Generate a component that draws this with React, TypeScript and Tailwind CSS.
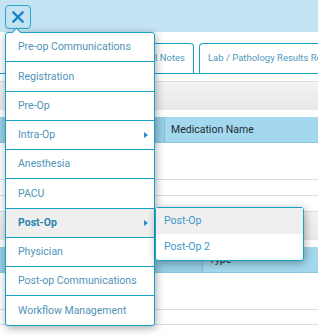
import React from 'react';

interface MenuItem {
  label: string;
  h: string;
  arrow?: boolean;
  active?: boolean;
}

// heights include the 1px divider (border-box)
const menuItems: MenuItem[] = [
  { label: 'Pre-op Communications', h: 'h-[29px]' },
  { label: 'Registration', h: 'h-[30px]' },
  { label: 'Pre-Op', h: 'h-[29px]' },
  { label: 'Intra-Op', h: 'h-[29px]', arrow: true },
  { label: 'Anesthesia', h: 'h-[29px]' },
  { label: 'PACU', h: 'h-[30px]' },
  { label: 'Post-Op', h: 'h-[29px]', arrow: true, active: true },
  { label: 'Physician', h: 'h-[29px]' },
  { label: 'Post-op Communications', h: 'h-[29px]' },
  { label: 'Workflow Management', h: 'h-[29px]' },
];

const Arrow = () => (
  <span className="ml-auto mr-[6px] w-0 h-0 border-y-[3px] border-y-transparent border-l-[4px] border-l-[#2a8fc4]" />
);

const Toolbar = () => (
  <div className="h-[29px] border-t border-[#dcdcdc] bg-gradient-to-b from-[#f3f3f3] to-[#e7e7e7]" />
);

const TableHeader = ({ firstCol, label }: { firstCol: string; label: string }) => (
  <div className="flex h-[26px] bg-[#a3d8ee] border-b border-[#8cc6de] text-[10.5px] text-[#1f2a30]">
    <div className={`${firstCol} shrink-0 bg-[#97cfe6] border-r border-[#84bfd8]`} />
    <div className="flex items-center pl-[6px]">{label}</div>
  </div>
);

export default function App() {
  return (
    <div
      className="relative w-[318px] h-[335px] overflow-hidden bg-white"
      style={{ fontFamily: 'Roboto, "Liberation Sans", Arial, sans-serif' }}
    >
      {/* top bar */}
      <div className="h-[32px] bg-[#c4e4f4] pt-[5px] pl-[5px]">
        <div className="w-[26px] h-[24px] rounded-[4px] border border-[#2aa6cc] flex items-center justify-center">
          <svg width="12" height="12" viewBox="0 0 12 12">
            <path d="M1.5 1.5 L10.5 10.5 M10.5 1.5 L1.5 10.5" stroke="#1b84c6" strokeWidth="2.4" strokeLinecap="square" />
          </svg>
        </div>
      </div>

      {/* tabs */}
      <div className="mt-[11px] h-[31px] flex items-end border-b border-[#17a2c4] text-[9.5px] text-[#4f98bd]">
        <div className="ml-[94px] w-[100px] h-[30px] shrink-0 flex items-center justify-end pr-[8px] border-t border-x border-[#17a2c4] rounded-t-[4px]">
          Surgical Notes
        </div>
        <div className="ml-[5px] w-[170px] h-[30px] shrink-0 flex items-center pl-[8px] whitespace-nowrap border-t border-x border-[#17a2c4] rounded-t-[4px]">
          Lab / Pathology Results Rec
        </div>
      </div>

      {/* section 1 */}
      <div className="mt-[7px]">
        <Toolbar />
      </div>
      <div className="mt-[7px]">
        <TableHeader firstCol="w-[165px]" label="Medication Name" />
      </div>
      <div className="h-[37px] border-b border-[#dddddd]" />
      <div className="h-[16px] border-b border-[#dddddd]" />

      {/* section 2 */}
      <div className="mt-[15px]">
        <Toolbar />
      </div>
      <div className="mt-[7px]">
        <TableHeader firstCol="w-[203px]" label="Type" />
      </div>
      <div className="h-[37px] border-b border-[#dddddd]" />
      <div className="h-[15px] border-b border-[#dddddd]" />

      {/* main menu */}
      <div className="absolute left-[5px] top-[32px] w-[150px] bg-white border border-[#17a2c4] rounded-[3px] shadow-[1px_2px_8px_rgba(0,0,0,0.35)]">
        <div className="absolute left-[7px] -top-[4px] w-[7px] h-[7px] rotate-45 bg-white border-t border-l border-[#17a2c4]" />
        {menuItems.map((item, i) => (
          <div
            key={item.label}
            className={`relative flex items-center pl-[12px] text-[10.5px] ${item.h} ${
              i < menuItems.length - 1 ? 'border-b border-[#17a2c4]' : ''
            } ${item.active ? 'bg-[#efefef] font-bold text-[#2a82ad]' : 'text-[#5193b8]'}`}
          >
            {item.label}
            {item.arrow && <Arrow />}
          </div>
        ))}
      </div>

      {/* submenu */}
      <div className="absolute left-[155px] top-[207px] w-[149px] bg-white border border-[#17a2c4] rounded-[3px] shadow-[1px_2px_8px_rgba(0,0,0,0.35)] text-[10.5px] text-[#3d9acb]">
        <div className="h-[26px] flex items-center pl-[8px] bg-[#efefef]">Post-Op</div>
        <div className="h-[26px] flex items-center pl-[8px]">Post-Op 2</div>
      </div>
    </div>
  );
}
